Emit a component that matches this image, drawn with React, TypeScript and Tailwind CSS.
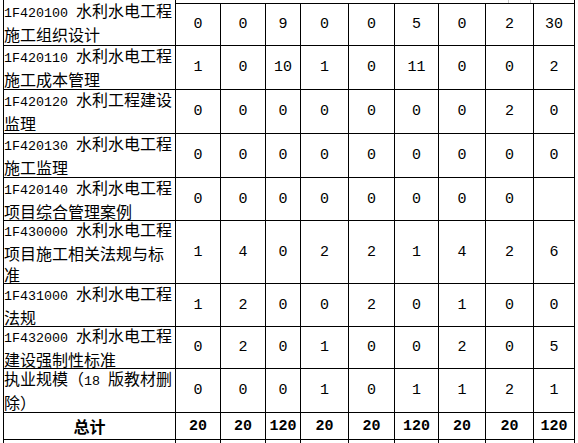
import React from "react";

type Row = { label: string[]; values: string[] };

const rows: Row[] = [
  { label: ["1F420100 水利水电工程", "施工组织设计"], values: ["0", "0", "9", "0", "0", "5", "0", "2", "30"] },
  { label: ["1F420110 水利水电工程", "施工成本管理"], values: ["1", "0", "10", "1", "0", "11", "0", "0", "2"] },
  { label: ["1F420120 水利工程建设", "监理"], values: ["0", "0", "0", "0", "0", "0", "0", "2", "0"] },
  { label: ["1F420130 水利水电工程", "施工监理"], values: ["0", "0", "0", "0", "0", "0", "0", "0", "0"] },
  { label: ["1F420140 水利水电工程", "项目综合管理案例"], values: ["0", "0", "0", "0", "0", "0", "0", "0", ""] },
  { label: ["1F430000 水利水电工程", "项目施工相关法规与标", "准"], values: ["1", "4", "0", "2", "2", "1", "4", "2", "6"] },
  { label: ["1F431000 水利水电工程", "法规"], values: ["1", "2", "0", "0", "2", "0", "1", "0", "0"] },
  { label: ["1F432000 水利水电工程", "建设强制性标准"], values: ["0", "2", "0", "1", "0", "0", "2", "0", "5"] },
  { label: ["执业规模（18 版教材删", "除）"], values: ["0", "0", "0", "1", "0", "1", "1", "2", "1"] },
];

const totals = ["20", "20", "120", "20", "20", "120", "20", "20", "120"];

// split a line into ascii / cjk runs so the latin part gets the half-width mono face
function Line({ text }: { text: string }) {
  const parts = text.match(/[\x20-\x7e]+|[^\x20-\x7e]+/g) ?? [];
  return (
    <div className="whitespace-pre">
      {parts.map((p, i) =>
        /^[\x20-\x7e]+$/.test(p) ? (
          <span key={i} className="font-['Liberation_Mono',monospace] text-[13.33px]">
            {p}
          </span>
        ) : (
          <span key={i}>{p}</span>
        ),
      )}
    </div>
  );
}

function Num({ v, bold }: { v: string; bold?: boolean }) {
  return (
    <div
      className={
        "flex items-center justify-center bg-white font-['Liberation_Mono',monospace] text-[15px] " +
        (bold ? "font-bold" : "")
      }
    >
      {v}
    </div>
  );
}

export default function App() {
  return (
    <div className="h-[443px] w-[578px] overflow-hidden bg-white font-['Noto_Sans_CJK_SC',sans-serif] text-[16px] leading-[21px] text-black">
      <div className="ml-[3px] grid w-[572px] grid-cols-[171px_44px_44px_34px_47px_45px_43px_46px_47px_40px] grid-rows-[3px_41px_43px_43px_43px_42px_62px_42px_41px_43px_26px_4px] gap-px bg-black px-px">
        {rows.map((r, ri) => (
          <React.Fragment key={ri}>
            <div
              className={
                "flex flex-col justify-center bg-white " + (ri === 0 ? "row-span-2" : "")
              }
            >
              {r.label.map((l) => (
                <Line key={l} text={l} />
              ))}
            </div>
            {ri === 0 && (
              <div className="col-span-9 bg-white">
                <div className="ml-[332px] h-[3px] w-[23px] border-x border-[#c8c8c8]" />
              </div>
            )}
            {r.values.map((v, vi) => (
              <Num key={vi} v={v} />
            ))}
          </React.Fragment>
        ))}
        <div className="flex items-center justify-center bg-white font-bold">总计</div>
        {totals.map((v, i) => (
          <Num key={i} v={v} bold />
        ))}
        {Array.from({ length: 10 }).map((_, i) => (
          <div key={i} className="bg-white" />
        ))}
      </div>
    </div>
  );
}
